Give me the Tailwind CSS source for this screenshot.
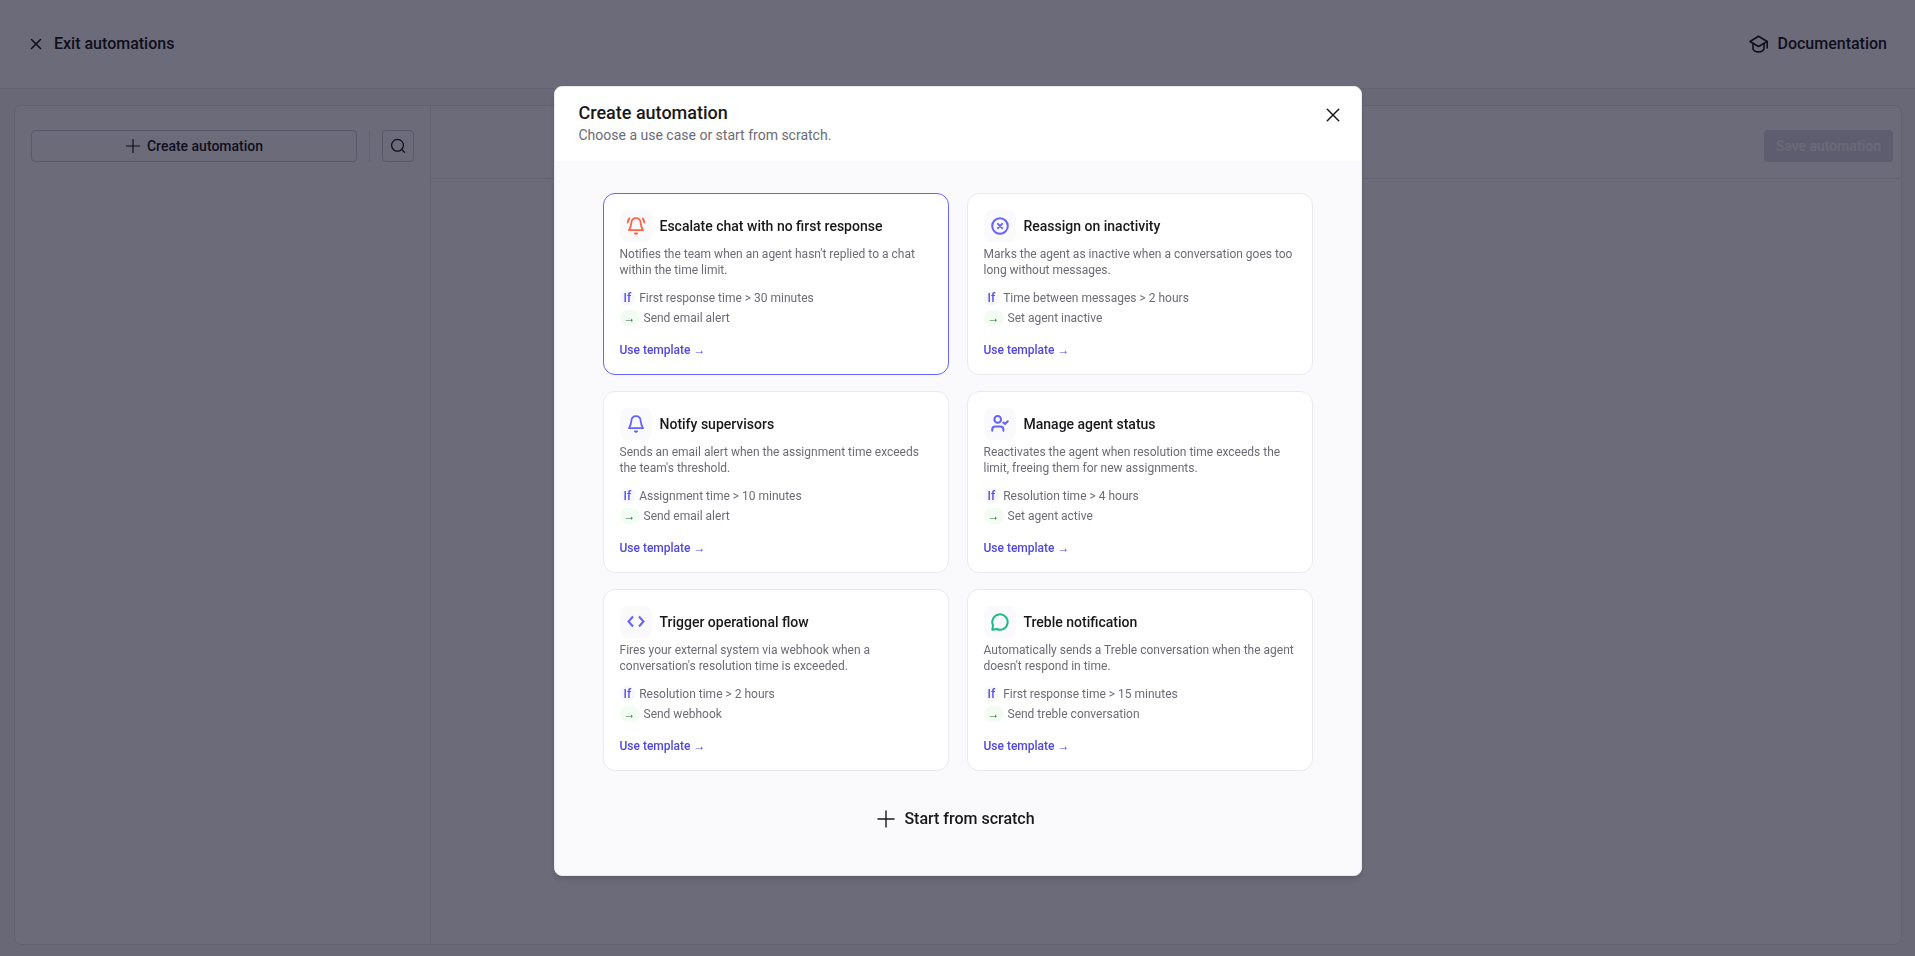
<!DOCTYPE html>
<html lang="en">
<head>
<meta charset="utf-8">
<title>Automations</title>
<meta name="viewport" content="width=device-width, initial-scale=1">
<script src="https://cdn.jsdelivr.net/npm/@tailwindcss/browser@4"></script>
</head>
<body class="font-['HK_Grotesk','Roboto',sans-serif] text-[#18181b]">
<div class="flex h-screen flex-col bg-[#f8f8fb]">
  <header class="flex h-[89px] items-center justify-between border-b border-[#e9e9f0] bg-white pr-7 pl-6">
    <button type="button" class="flex items-center gap-1.5 text-base font-medium">
      <svg class="size-6" viewBox="0 0 24 24" fill="none" stroke="currentColor" stroke-width="1.6" stroke-linecap="round"><path d="M7.500 7.500l9 9M16.500 7.500l-9 9"/></svg>
      Exit automations
    </button>
    <a href="#docs" class="flex items-center gap-2 text-base font-medium">
      <svg class="size-5" viewBox="0 0 20 20" fill="none" stroke="currentColor" stroke-width="1.6" stroke-linejoin="round" stroke-linecap="round"><path d="M1 7.500L9.500 2.200l8.700 5.300-8.700 5z"/><path d="M4 9.500v5.500c.8 1.900 3 2.900 5.500 2.900s4.700-1 5.500-2.900V9.500M18.200 7.500v6.500"/></svg>
      Documentation
    </a>
  </header>
  <main class="mr-[13px] ml-[14px] mt-4 mb-[11px] flex min-h-0 flex-1 overflow-hidden rounded-lg border border-[#e9e9f0] bg-white">
    <aside class="w-[416px] shrink-0 border-r border-[#e9e9f0] px-4 pt-6">
      <div class="flex h-8 items-stretch gap-3">
        <button type="button" class="flex flex-1 items-center justify-center gap-1.5 rounded border border-[#d0d0dc] text-sm font-medium">
          <svg class="size-4" viewBox="0 0 16 16" fill="none" stroke="currentColor" stroke-width="1.2"><path d="M8 1v14M1 8h14"/></svg>
          Create automation
        </button>
        <div class="w-px bg-[#e9e9f0]"></div>
        <button type="button" aria-label="Search" class="flex w-8 items-center justify-center rounded border border-[#d0d0dc]">
          <svg class="size-4" viewBox="0 0 16 16" fill="none" stroke="currentColor" stroke-width="1.300" stroke-linecap="round"><circle cx="7.500" cy="7.300" r="5.900"/><path d="M11.800 11.600L14.500 14.300"/></svg>
        </button>
      </div>
    </aside>
    <section class="flex-1">
      <div class="flex h-[73px] items-start justify-end border-b border-[#e9e9f0] pt-6 pr-2">
        <button type="button" disabled class="h-8 rounded bg-[#dcdce8] px-3 text-sm font-medium text-[#fafafc]">Save automation</button>
      </div>
    </section>
  </main>
</div>

<div class="fixed inset-0 flex items-start justify-center bg-[#0a0820]/60 pt-[86px]">
  <div role="dialog" aria-labelledby="dialog-title" class="w-[808px] max-w-full overflow-hidden rounded-lg border border-[#e9e9f0] bg-[#fafafc] shadow-md">
    <div class="flex items-start justify-between bg-white pt-[15px] pr-4 pb-4 pl-6">
      <div>
        <h1 id="dialog-title" class="text-lg leading-[22px] font-medium">Create automation</h1>
        <p class="mt-px text-sm leading-5 text-[#6b6b76]">Choose a use case or start from scratch.</p>
      </div>
      <button type="button" aria-label="Close" class="flex h-[26px] w-6 items-center justify-center">
        <svg class="size-6" viewBox="0 0 24 24" fill="none" stroke="currentColor" stroke-width="1.500" stroke-linecap="round"><path d="M6.300 6.300l11.400 11.400M17.700 6.300L6.300 17.700"/></svg>
      </button>
    </div>
    <div id="cards" class="grid grid-cols-2 gap-x-[18px] gap-y-4 px-12 pt-8"></div>
    <div class="flex justify-center pt-9 pb-11">
      <button type="button" class="flex items-center gap-2 pr-1 text-base font-medium">
        <svg class="size-5" viewBox="0 0 20 20" fill="none" stroke="currentColor" stroke-width="1.400"><path d="M10 1.500v17M1.500 10h17"/></svg>
        Start from scratch
      </button>
    </div>
  </div>
</div>

<template id="card">
  <article class="rounded-xl border bg-white p-4">
    <div class="flex items-center gap-2">
      <span class="flex size-8 shrink-0 items-center justify-center rounded-lg bg-[#fafafc]" data-icon></span>
      <h2 class="text-sm font-medium" data-title></h2>
    </div>
    <p class="mt-1 text-xs leading-4 text-[#6b6b76]" data-text></p>
    <div class="mt-3 flex items-center gap-1 text-xs leading-4 text-[#6b6b76]"><span class="rounded-full bg-[#f7f7ff] px-1 font-medium text-[#5b50e6]">If</span><span data-if></span></div>
    <div class="mt-1 flex items-center gap-1 text-xs leading-4 text-[#6b6b76]"><span class="rounded-full bg-[#f3fcf3] px-1 font-medium text-[#2f6b35]">→</span><span data-then></span></div>
    <button type="button" class="mt-4 block text-xs leading-4 font-medium text-[#4f46e5]">Use template →</button>
  </article>
</template>
<script>
const svg = (color, body) => `<svg width="20" height="20" viewBox="0 0 20 20" fill="none" stroke="${color}" stroke-width="2" stroke-linecap="round" stroke-linejoin="round">${body}</svg>`;
const bell = '<path stroke-width="1.800" d="M10 2.200c-3 0-4.500 2.300-4.700 5-.2 3.300-.8 4.300-2.300 7h14c-1.500-2.700-2.100-3.700-2.300-7-.2-2.700-1.700-5-4.700-5z"/><path stroke-width="1.600" d="M8.700 17.300c.6.800 2 .8 2.600 0z"/>';
const cards = [
  ['Escalate chat with no first response', "Notifies the team when an agent hasn't replied to a chat within the time limit.", 'First response time > 30 minutes', 'Send email alert', svg('#ff6347', bell + '<path stroke-width="1.800" d="M3.300 2.500c-1 1-1.500 2.200-1.600 4M16.700 2.500c1 1 1.500 2.200 1.600 4"/>')],
  ['Reassign on inactivity', 'Marks the agent as inactive when a conversation goes too long without messages.', 'Time between messages > 2 hours', 'Set agent inactive', svg('#6563ff', '<circle cx="10" cy="10" r="7.800"/><path d="M7.900 7.900l4.200 4.200M12.100 7.900l-4.200 4.200"/>')],
  ['Notify supervisors', "Sends an email alert when the assignment time exceeds the team's threshold.", 'Assignment time > 10 minutes', 'Send email alert', svg('#6563ff', bell)],
  ['Manage agent status', 'Reactivates the agent when resolution time exceeds the limit, freeing them for new assignments.', 'Resolution time > 4 hours', 'Set agent active', svg('#6563ff', '<circle cx="7.700" cy="5.400" r="3.300"/><path d="M2.200 16.700v-1c0-2 1.300-3.200 3.200-3.200h4.800c1.900 0 3.200 1.200 3.200 3.200v1M13.300 8.500l1.700 1.500 2.800-2.800"/>')],
  ['Trigger operational flow', "Fires your external system via webhook when a conversation's resolution time is exceeded.", 'Resolution time > 2 hours', 'Send webhook', svg('#6563ff', '<path stroke-linecap="butt" stroke-linejoin="miter" d="M7 4.500L2.500 9.500l4.500 5M13 4.500l4.500 5-4.500 5"/>')],
  ['Treble notification', "Automatically sends a Treble conversation when the agent doesn't respond in time.", 'First response time > 15 minutes', 'Send treble conversation', svg('#1abc86', '<path d="M2.300 17.700l.7-4.400A7.700 7.700 0 1 1 6.700 17z"/>')],
];
cards.forEach(([title, text, cond, action, icon], i) => {
  const c = document.getElementById('card').content.cloneNode(true);
  c.querySelector('article').classList.add(i === 0 ? 'border-[#6563ff]' : 'border-[#e9e9ee]');
  c.querySelector('[data-title]').textContent = title;
  c.querySelector('[data-text]').textContent = text;
  c.querySelector('[data-if]').textContent = cond;
  c.querySelector('[data-then]').textContent = action;
  c.querySelector('[data-icon]').innerHTML = icon;
  document.getElementById('cards').append(c);
});
</script>
</body>
</html>
